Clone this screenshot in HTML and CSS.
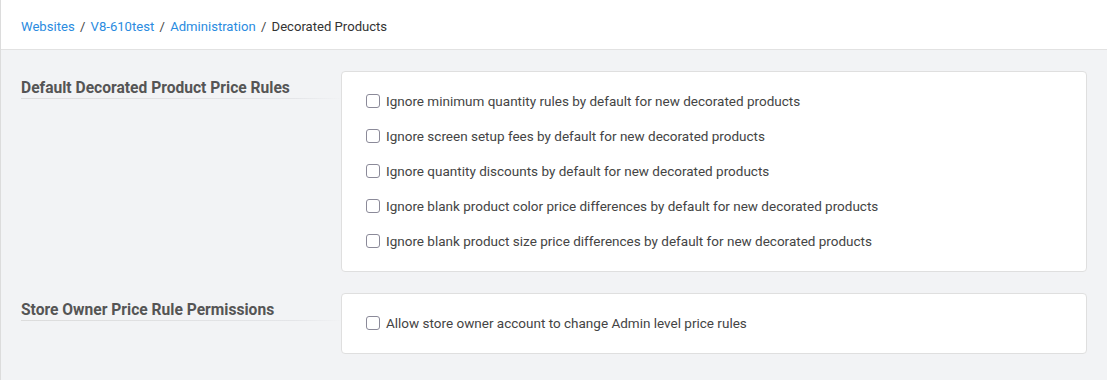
FILE: index.html
```html
<!DOCTYPE html>
<html lang="en">
<head>
    <meta charset="UTF-8">
    <meta name="viewport" content="width=device-width, initial-scale=1.0">
    <title>Decorated Products</title>
    <link rel="stylesheet" href="styles.css">
</head>
<body>
    <div class="header">
        <nav class="breadcrumb">
            <a href="#">Websites</a> <span class="sep">/</span>
            <a href="#">V8-610test</a> <span class="sep">/</span>
            <a href="#">Administration</a> <span class="sep">/</span>
            <span class="current">Decorated Products</span>
        </nav>
    </div>

    <div class="content">
        <div class="section">
            <h3 class="section-title">Default Decorated Product Price Rules</h3>
            <div class="card">
                <label class="option"><input type="checkbox" name="ignore_min_qty"> <span>Ignore minimum quantity rules by default for new decorated products</span></label>
                <label class="option"><input type="checkbox" name="ignore_setup_fees"> <span>Ignore screen setup fees by default for new decorated products</span></label>
                <label class="option"><input type="checkbox" name="ignore_qty_discounts"> <span>Ignore quantity discounts by default for new decorated products</span></label>
                <label class="option"><input type="checkbox" name="ignore_color_price"> <span>Ignore blank product color price differences by default for new decorated products</span></label>
                <label class="option"><input type="checkbox" name="ignore_size_price"> <span>Ignore blank product size price differences by default for new decorated products</span></label>
            </div>
        </div>

        <div class="section">
            <h3 class="section-title">Store Owner Price Rule Permissions</h3>
            <div class="card">
                <label class="option"><input type="checkbox" name="owner_change_rules"> <span>Allow store owner account to change Admin level price rules</span></label>
            </div>
        </div>
    </div>
</body>
</html>
```

FILE: styles.css
```css
body {
    font-family: Roboto, "Liberation Sans", sans-serif;
    font-size: 13px;
    color: #333;
    margin: 0;
    background-color: #f2f3f5;
    border-left: 1px solid #dcdcdc;
    min-height: 100vh;
    box-sizing: border-box;
}
.header {
    background: white;
    height: 50px;
    box-sizing: border-box;
    border-bottom: 1px solid #e2e2e2;
    display: flex;
    align-items: center;
    padding: 3px 20px 0;
    font-size: 13.1px;
}
.breadcrumb a {
    color: #2a8be0;
    text-decoration: none;
}
.breadcrumb .sep {
    color: #444;
    margin: 0 2px;
}
.breadcrumb .current {
    color: #333;
}
.content {
    padding: 21px 20px 20px 20px;
    display: flex;
    flex-direction: column;
    gap: 21px;
}
.section {
    display: grid;
    grid-template-columns: 308px 1fr;
    gap: 12px;
    align-items: start;
}
.section-title {
    margin: 0;
    padding: 7px 0 0;
    font-size: 15.6px;
    line-height: 20px;
    font-weight: bold;
    color: #555;
    position: relative;
}
.section-title::after {
    content: "";
    position: absolute;
    left: 0;
    right: -14px;
    bottom: -1px;
    height: 1px;
    background: linear-gradient(to right, #dcdcdc, #e4e5e8 85%, rgba(230, 231, 234, 0));
}
.card {
    background: white;
    border: 1px solid #dfdfdf;
    border-radius: 4px;
    padding: 11px 24px 13px;
}
.option {
    display: flex;
    align-items: center;
    gap: 6px;
    height: 35px;
    font-size: 13.5px;
    color: #444;
    cursor: pointer;
}
.option input {
    appearance: none;
    -webkit-appearance: none;
    width: 14px;
    height: 14px;
    margin: 0;
    border: 1px solid #8b8a99;
    border-radius: 3px;
    background: white;
    flex: none;
}
.option input:checked {
    background-color: #2a8be0;
    border-color: #2a8be0;
}
```
